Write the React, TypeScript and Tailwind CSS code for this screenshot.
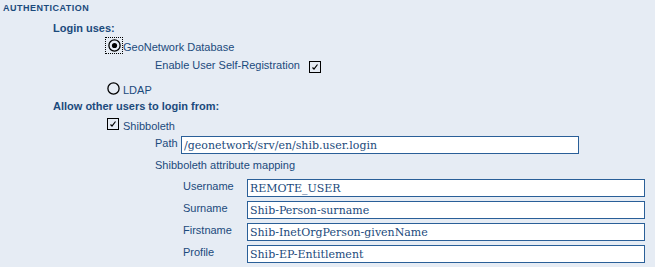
import React from 'react';

const Radio = ({ checked }: { checked?: boolean }) => (
  <svg width="13" height="13" viewBox="0 0 13 13" className="block">
    <circle cx="6.5" cy="6.5" r="5.6" fill="none" stroke="#000" strokeWidth="1.3" />
    {checked && <circle cx="6.5" cy="6.5" r="2.6" fill="#000" />}
  </svg>
);

const Checkbox = () => (
  <svg width="12" height="12" viewBox="0 0 12 12" className="block">
    <rect x="0.5" y="0.5" width="11" height="11" fill="none" stroke="#000" strokeWidth="1" />
    <path d="M3.5 6.5 L5 8 L8.5 3.5" fill="none" stroke="#000" strokeWidth="1.2" />
  </svg>
);

const Field = ({ value, width = 'w-[398px]' }: { value: string; width?: string }) => (
  <input
    readOnly
    value={value}
    className={`${width} h-[18px] border border-[#2a5f98] bg-white px-[2px] text-[#1b4a7c] font-['DejaVu_Serif',serif] text-[11px] leading-[16px] outline-none`}
  />
);

const mapping = [
  { label: 'Username', value: 'REMOTE_USER' },
  { label: 'Surname', value: 'Shib-Person-surname' },
  { label: 'Firstname', value: 'Shib-InetOrgPerson-givenName' },
  { label: 'Profile', value: 'Shib-EP-Entitlement' },
];

export default function App() {
  return (
    <div className="w-[655px] h-[267px] overflow-hidden bg-[#e6ecf4] text-[#1b4a7c] font-['Liberation_Sans',Arial,sans-serif] text-[11px] leading-[13px]">
      <div className="pt-[3px] pl-[3px] text-[9px] font-bold leading-[11px] tracking-[0.5px]">
        AUTHENTICATION
      </div>

      <div className="mt-[8px] pl-[53px] font-bold">Login uses:</div>

      <div className="mt-[2px] flex items-start pl-[105px] h-[17px]">
        <div className="w-[18px] h-[17px] border border-dotted border-black flex items-center justify-center">
          <Radio checked />
        </div>
        <span className="pt-[4px]">GeoNetwork Database</span>
      </div>

      <div className="mt-[5px] flex items-start pl-[155px] h-[14px]">
        <span>Enable User Self-Registration</span>
        <span className="ml-[9px] mt-[2px]">
          <Checkbox />
        </span>
      </div>

      <div className="mt-[9px] flex items-start pl-[107px] h-[13px]">
        <Radio />
        <span className="ml-[3px] mt-[2px]">LDAP</span>
      </div>

      <div className="mt-[5px] pl-[53px] font-bold">Allow other users to login from:</div>

      <div className="mt-[5px] flex items-start pl-[107px] h-[13px]">
        <Checkbox />
        <span className="ml-[4px] mt-[2px]">Shibboleth</span>
      </div>

      <div className="mt-[5px] flex items-start pl-[155px]">
        <span className="w-[26px] pt-[1px]">Path</span>
        <Field value="/geonetwork/srv/en/shib.user.login" />
      </div>

      <div className="mt-[5px] pl-[155px]">Shibboleth attribute mapping</div>

      <div className="mt-[7px] flex flex-col gap-[4px]">
        {mapping.map((m) => (
          <div key={m.label} className="flex items-start pl-[183px]">
            <span className="w-[64px] pt-[1px]">{m.label}</span>
            <Field value={m.value} />
          </div>
        ))}
      </div>
    </div>
  );
}
